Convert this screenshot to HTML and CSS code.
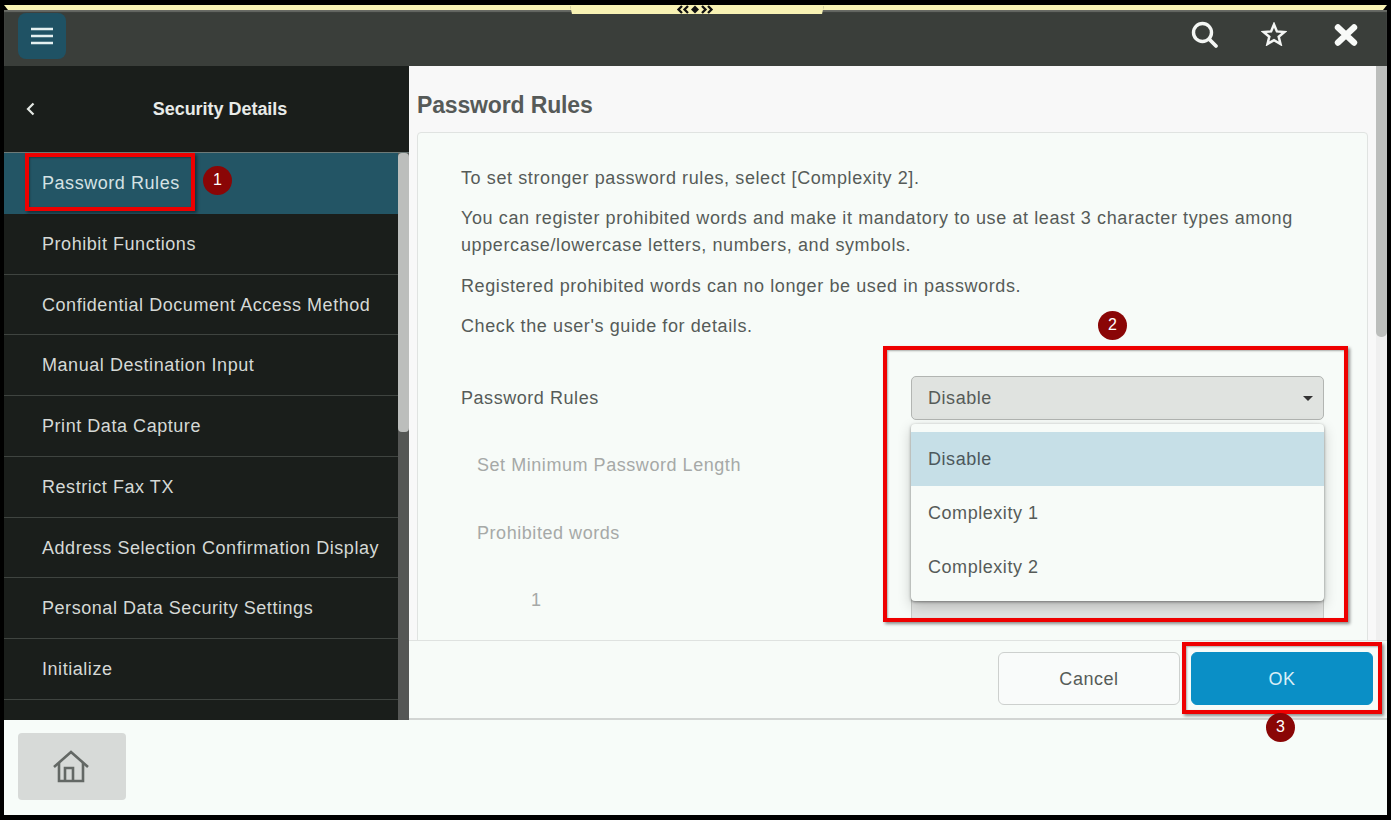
FILE: index.html
```html
<!doctype html>
<html>
	<head>
		<title>Security Details</title>
		<meta charset="utf-8"/>
		<link rel="stylesheet" href="styles.css">
	</head>
	<body>
		<div class="screen">

			<div class="topstrip"></div>
			<div class="pulltab">
				<svg width="38" height="9" viewBox="0 0 38 9">
					<path d="M6 1 2.500 4.500 6 8M12 1 8.500 4.500 12 8M26 1 29.500 4.500 26 8M32 1 35.500 4.500 32 8" fill="none" stroke="#111" stroke-width="2.300"/>
					<path d="M19 .5 23 4.500 19 8.500 15 4.500Z" fill="#111"/>
				</svg>
			</div>

			<header class="topbar">
				<button class="menu-btn">
					<svg width="24" height="20" viewBox="0 0 24 20"><path d="M1 3H23M1 10H23M1 17H23" stroke="#e4f0f0" stroke-width="2.600" fill="none"/></svg>
				</button>
				<div class="topbar-icons">
					<svg class="ico-search" width="28" height="28" viewBox="0 0 28 28">
						<circle cx="11.500" cy="11.500" r="9" fill="none" stroke="#f4f6f4" stroke-width="3.400"/>
						<path d="M18 18 25 25" stroke="#f4f6f4" stroke-width="3.800" stroke-linecap="round"/>
					</svg>
					<svg class="ico-star" width="26" height="24" viewBox="0 0 26 24">
						<path d="M13 2.500 15.900 9.400 23.500 10 17.700 14.800 19.500 22 13 18.100 6.500 22 8.300 14.800 2.500 10 10.100 9.400Z" fill="none" stroke="#f4f6f4" stroke-width="2.500"/>
					</svg>
					<svg class="ico-close" width="24" height="22" viewBox="0 0 24 22">
						<path d="M4 3.500 20 18.500M20 3.500 4 18.500" stroke="#f8faf8" stroke-width="6.400" stroke-linecap="round"/>
					</svg>
				</div>
			</header>

			<main class="main">
				<nav class="sidebar">
					<div class="sidebar-head">
						<svg class="back" width="9" height="14" viewBox="0 0 9 14"><path d="M7.500 1.500 2 7l5.500 5.500" fill="none" stroke="#e4e8e4" stroke-width="2.200"/></svg>
						<h2 class="sidebar-title">Security Details</h2>
					</div>
					<div class="sidebar-body">
						<ul class="nav-list">
							<li class="nav-item selected">Password Rules</li>
							<li class="nav-item">Prohibit Functions</li>
							<li class="nav-item">Confidential Document Access Method</li>
							<li class="nav-item">Manual Destination Input</li>
							<li class="nav-item">Print Data Capture</li>
							<li class="nav-item">Restrict Fax TX</li>
							<li class="nav-item">Address Selection Confirmation Display</li>
							<li class="nav-item">Personal Data Security Settings</li>
							<li class="nav-item">Initialize</li>
						</ul>
						<div class="nav-scroll"><div class="nav-thumb"></div></div>
					</div>
				</nav>

				<section class="content">
					<div class="scroll-area">
						<div class="scroll-body">
							<h1 class="page-title">Password Rules</h1>
							<div class="card">
								<p>To set stronger password rules, select [Complexity 2].</p>
								<p>You can register prohibited words and make it mandatory to use at least 3 character types among uppercase/lowercase letters, numbers, and symbols.</p>
								<p>Registered prohibited words can no longer be used in passwords.</p>
								<p>Check the user's guide for details.</p>

								<div class="form-grid">
									<label class="lbl">Password Rules</label>
									<div class="select-wrap">
										<div class="select">Disable<span class="caret"></span></div>
										<ul class="menu">
											<li class="menu-item current">Disable</li>
											<li class="menu-item">Complexity 1</li>
											<li class="menu-item">Complexity 2</li>
										</ul>
									</div>
									<label class="lbl off sub">Set Minimum Password Length</label>
									<div class="input-off"></div>
									<label class="lbl off sub">Prohibited words</label>
									<div class="input-off"></div>
									<label class="lbl off num">1</label>
									<div class="input-off"></div>
								</div>
							</div>
						</div>
						<div class="page-scroll"><div class="page-thumb"></div></div>
					</div>
					<div class="actions">
						<button class="btn">Cancel</button>
						<button class="btn primary">OK</button>
					</div>
				</section>
			</main>

			<footer class="bottombar">
				<button class="home-btn">
					<svg width="38" height="34" viewBox="0 0 38 34">
						<path d="M2 17 19 2 36 17" fill="none" stroke="#636865" stroke-width="2.600"/>
						<path d="M7 13V31H31V13M13 31V18H21V31" fill="none" stroke="#636865" stroke-width="2.600"/>
					</svg>
				</button>
			</footer>

			<!-- red callouts over the screenshot -->
			<div class="callout callout-1"></div>
			<div class="callout callout-2"></div>
			<div class="callout callout-3"></div>
			<div class="badge badge-1">1</div>
			<div class="badge badge-2">2</div>
			<div class="badge badge-3">3</div>
		</div>
	</body>
</html>
```

FILE: styles.css
```css
* { box-sizing: border-box; }

html, body {
	margin: 0;
	height: 820px;
	overflow: hidden;
	background: #000;
}

body {
	font-family: "Liberation Sans", Arial, sans-serif;
	font-size: 18px;
	letter-spacing: .55px;
	color: #565b58;
}

ul { list-style: none; margin: 0; padding: 0; }
button { font: inherit; letter-spacing: inherit; border: 0; padding: 0; }

.screen {
	position: relative;
	width: 1383px;
	height: 810px;
	margin: 5px 4px;
	display: flex;
	flex-direction: column;
	overflow: hidden;
}

.topstrip {
	height: 5px;
	flex: none;
	background: #f8f2b4;
	clip-path: polygon(0 0, 100% 0, calc(100% - 4px) 100%, 4px 100%);
}

.pulltab {
	position: absolute;
	left: 566px;
	top: 0;
	width: 254px;
	height: 9px;
	background: #f8f2b4;
	clip-path: polygon(0 0, 100% 0, calc(100% - 2px) 100%, 2px 100%);
	box-shadow: 0 1px 0 #6a6b66;
	z-index: 2;
	display: flex;
	justify-content: center;
}
.pulltab svg { margin-left: -4px; }

.topbar {
	height: 56px;
	flex: none;
	background: #3a3e3a;
	box-shadow: inset 0 2px 1px #686a65;
	display: flex;
	align-items: center;
	justify-content: space-between;
	padding: 0 29px 0 14px;
}

.menu-btn {
	width: 48px;
	height: 46px;
	margin-top: -5px;
	background: #1f5264;
	border-radius: 8px;
	display: flex;
	align-items: center;
	justify-content: center;
}

.topbar-icons { display: flex; align-items: center; }
.ico-search { margin-top: -6px; }
.ico-star { margin: -9px 0 0 42px; }
.ico-close { margin: -7px 0 0 47px; }

.main {
	height: 654px;
	flex: none;
	display: flex;
}

.sidebar {
	width: 405px;
	flex: none;
	background: #1a1e1b;
	display: flex;
	flex-direction: column;
}

.sidebar-head {
	height: 86px;
	flex: none;
	display: flex;
	align-items: center;
	padding-left: 22px;
}
.back { flex: none; }

.sidebar-title {
	flex: 1;
	margin: 0 0 0 -4px;
	text-align: center;
	font-size: 18px;
	font-weight: bold;
	letter-spacing: -.03px;
	color: #e8ebe8;
}

.sidebar-body {
	flex: 1;
	display: flex;
	min-height: 0;
	border-top: 1px solid #6d7a78;
}

.nav-list { flex: 1; overflow: hidden; }

.nav-item {
	height: 60.750px;
	line-height: 60.750px;
	padding-left: 38px;
	color: #d5d9d6;
	border-bottom: 1px solid #3f4440;
	white-space: nowrap;
}
.nav-item.selected {
	background: #235565;
	border-bottom-color: #235565;
	color: #d5e2e4;
}

.nav-scroll {
	width: 11px;
	flex: none;
	background: #555755;
}
.nav-thumb {
	height: 279px;
	background: #bcbebc;
	border-radius: 4px;
}

.content {
	flex: 1;
	min-width: 0;
	display: flex;
	flex-direction: column;
	background: #f7fbf8;
}

.scroll-area {
	height: 574px;
	flex: none;
	display: flex;
}

.scroll-body {
	flex: 1;
	min-width: 0;
	overflow: hidden;
	background: #f8f8f8;
	padding: 0 8px;
}

.page-title {
	margin: 0;
	height: 66px;
	line-height: 79px;
	font-size: 23px;
	font-weight: bold;
	letter-spacing: -.15px;
	color: #565a58;
}

.card {
	width: 951px;
	height: 700px;
	background: #f7fbf8;
	border: 1px solid #e0e3e1;
	border-radius: 4px;
	padding: 31.500px 43px;
}

.card p {
	margin: 0 0 13.500px;
	line-height: 27px;
	letter-spacing: .6px;
}

.form-grid {
	display: grid;
	grid-template-columns: 450px 413px;
	grid-auto-rows: 44px;
	row-gap: 23.500px;
	margin-top: 35.500px;
}

.lbl { line-height: 44px; }
.lbl.off { color: #a6a9a7; }
.lbl.sub { padding-left: 16px; }
.lbl.num { padding-left: 70px; }

.select-wrap { position: relative; }

.select {
	height: 44px;
	line-height: 42px;
	background: #e0e3e0;
	border: 1px solid #b2b5b2;
	border-radius: 5px;
	padding-left: 16px;
	position: relative;
}

.caret {
	position: absolute;
	right: 10px;
	top: 19px;
	border: 5px solid transparent;
	border-top: 5px solid #333;
	border-bottom: 0;
}

.menu {
	position: absolute;
	z-index: 1;
	left: 0;
	right: 0;
	top: 48px;
	height: 177px;
	padding-top: 8px;
	background: #f7fbf8;
	border-radius: 4px;
	box-shadow: 0 1px 3px #0000006b, 0 5px 14px #00000033;
}

.menu-item {
	height: 54px;
	line-height: 54px;
	padding-left: 17px;
}
.menu-item.current {
	background: #c6dfe7;
	color: #4c585c;
}

.input-off {
	background: #e2e4e2;
	border: 1px solid #c6c9c6;
	border-radius: 5px;
}

.page-scroll {
	width: 11px;
	flex: none;
	background: #efefef;
}
.page-thumb {
	height: 271px;
	background: #bcbebc;
	border-radius: 0 0 5px 5px;
}

.actions {
	height: 80px;
	flex: none;
	display: flex;
	justify-content: flex-end;
	gap: 11px;
	padding: 11px 14px 0 0;
	border-top: 1px solid #dfe2e0;
	border-bottom: 2px solid #d2d5d3;
}

.btn {
	width: 182px;
	height: 53px;
	padding-top: 1px;
	background: #f9fbfa;
	border: 1px solid #cdd0ce;
	border-radius: 6px;
	color: #565b58;
}
.btn.primary {
	background: #0a8fc6;
	border-color: #0a8fc6;
	color: #d9eef6;
}

.bottombar {
	flex: 1;
	background: #f7fcf9;
	padding: 13px 14px;
}

.home-btn {
	width: 108px;
	height: 67px;
	padding-right: 2px;
	background: #d7dad8;
	border-radius: 4px;
	display: flex;
	align-items: center;
	justify-content: center;
}

.callout {
	position: absolute;
	z-index: 5;
	border: 4px solid #ee0000;
	box-shadow: 2px 2px 3px #00000070, inset 1px 1px 2px #00000050;
}
.callout-1 { left: 21px; top: 148px; width: 170px; height: 58px; }
.callout-2 { left: 879px; top: 341px; width: 465px; height: 276px; }
.callout-3 { left: 1178px; top: 637px; width: 200px; height: 72px; }

.badge {
	position: absolute;
	z-index: 6;
	width: 29px;
	height: 29px;
	border-radius: 50%;
	background: #8a0606;
	color: #fff;
	font-size: 16px;
	letter-spacing: 0;
	line-height: 28px;
	text-align: center;
}
.badge-1 { left: 199px; top: 161px; }
.badge-2 { left: 1094px; top: 306px; }
.badge-3 { left: 1262px; top: 708px; }
```
